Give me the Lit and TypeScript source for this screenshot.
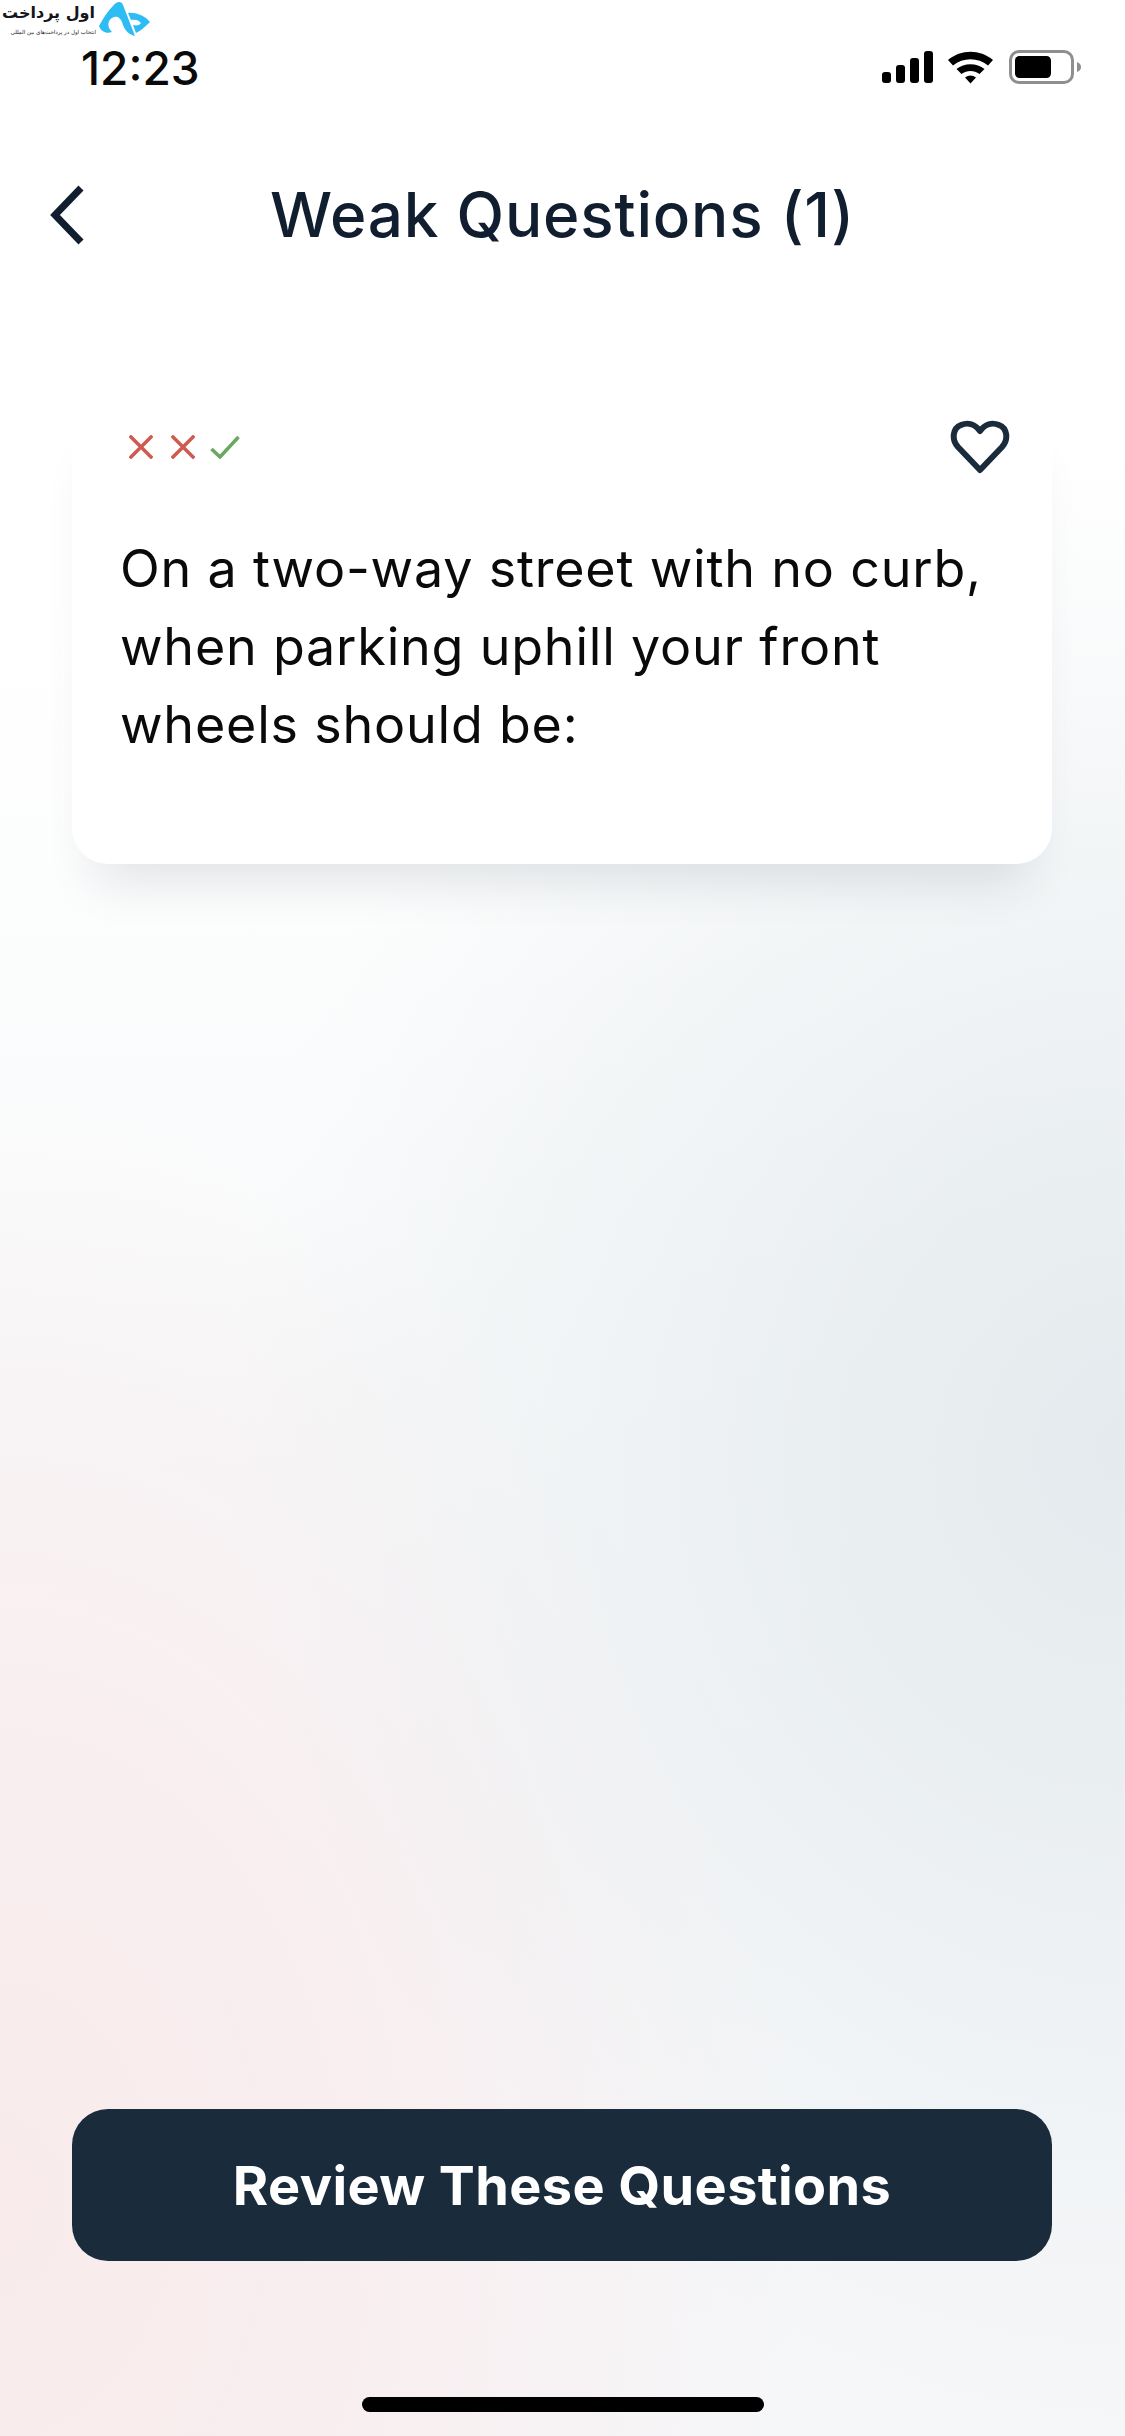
import { LitElement, html, css } from "lit";
import { customElement } from "lit/decorators.js";

@customElement("app-root")
export class AppRoot extends LitElement {
  static styles = css`
    :host { display: block; width: 1125px; font-family: "Inter", "Noto Sans", sans-serif; }
    .page {
      position: relative; width: 1125px; height: 2436px; overflow: hidden; box-sizing: border-box;
      display: flex; flex-direction: column;
      background:
        radial-gradient(900px 1000px at 1125px 1450px, #e4eaed 0%, rgba(228,234,237,0.6) 40%, rgba(228,234,237,0) 100%),
        radial-gradient(800px 1100px at 0px 2200px, #f9ebec 0%, rgba(249,235,236,0.75) 45%, rgba(249,235,236,0) 100%),
        linear-gradient(180deg, #ffffff 0%, #ffffff 25%, #f7f9fa 60%, #f6f7f9 100%);
    }
    .logo { position: absolute; left: 0; top: 0; width: 152px; height: 38px; }
    .logo-title { position: absolute; left: 1px; top: -1px; width: 94px; text-align: right; font: 700 16px/28px "DejaVu Sans", sans-serif; color: #14161c; white-space: nowrap; }
    .logo-sub { position: absolute; left: 1px; top: 27px; width: 95px; text-align: right; font: 400 5.5px/10px "DejaVu Sans", sans-serif; color: #14161c; white-space: nowrap; }
    .logo-mark { position: absolute; left: 98px; top: 0; width: 54px; height: 38px; }
    .status { height: 100px; box-sizing: border-box; padding: 40px 43px 0 81px; display: flex; justify-content: space-between; align-items: flex-start; flex: none; }
    .time { font-size: 46px; line-height: 56px; font-weight: 500; color: #0a0a0a; }
    .status-icons { display: block; margin-top: 10px; width: 200px; height: 36px; }
    .header { height: 130px; margin-top: 50px; display: flex; align-items: center; justify-content: center; position: relative; flex: none; }
    .back { position: absolute; left: 40px; top: 50%; margin-top: -49px; width: 50px; height: 98px; }
    .title { font-size: 62px; font-weight: 500; letter-spacing: 0.8px; color: #111e30; line-height: 70px; }
    .content { flex: 1; padding: 124px 73px 0 72px; }
    .card {
      background: #fff; border-radius: 0 0 36px 36px; height: 460px; box-sizing: border-box;
      box-shadow: 0 40px 50px -24px rgba(30,45,60,0.13);
      padding: 31px 42px 0 48px;
    }
    .card-top { display: flex; justify-content: space-between; align-items: flex-start; }
    .marks { display: flex; gap: 18px; margin-left: 9px; }
    .marks svg { display: block; }
    .heart { display: block; margin-top: -15px; }
    .question { margin: 56px 0 0 0; font-size: 52px; line-height: 78px; letter-spacing: 0.8px; color: #0a0a0a; font-weight: 400; }
    .footer { padding: 0 73px 175px 72px; flex: none; }
    .btn {
      height: 152px; border-radius: 36px; background: #1a2b3c; color: #fff;
      display: flex; align-items: center; justify-content: center;
      font-size: 54px; font-weight: 700; letter-spacing: 0.4px;
    }
    .home { position: absolute; left: 362px; top: 2397px; width: 402px; height: 15px; border-radius: 8px; background: #000; }
  `;

  render() {
    return html`
      <div class="page">
        <div class="logo">
          <div class="logo-title" dir="rtl" lang="fa">اول پرداخت</div>
          <div class="logo-sub" dir="rtl" lang="fa">انتخاب اول در پرداخت‌های بین المللی</div>
          <svg class="logo-mark" viewBox="0 0 54 38" aria-hidden="true">
            <path d="M1 26 C6 17 12 8 18 3 C21 1 24 2 25 5 L37 36 C31 34 28 32 25 25 C23 18 20 16 16 17 C10 19 8 26 14 32 C9 34 3 32 1 26Z" fill="#2dbcf4"/>
            <path d="M30 13 C39 12 48 17 52 22 C47 27 42 31 38 33 L35 25 C39 26 42 25 43 23 C41 20 37 19 33 20Z" fill="#2dbcf4"/>
          </svg>
        </div>

        <div class="status">
          <div class="time">12:23</div>
          <svg class="status-icons" viewBox="0 0 200 36" aria-hidden="true">
            <rect x="0" y="22" width="9" height="11" rx="3" fill="#000"/>
            <rect x="14" y="15" width="9" height="18" rx="3" fill="#000"/>
            <rect x="28" y="8" width="9" height="25" rx="3" fill="#000"/>
            <rect x="42" y="1" width="9" height="32" rx="3" fill="#000"/>
            <path d="M66 10 C79 -1 98 -1 111 10 L106 15.5 C96 7 81 7 71 15.5Z" fill="#000"/>
            <path d="M74.5 19 C82 12.5 95 12.5 102.5 19 L97.5 24 C92 20 85 20 79.5 24Z" fill="#000"/>
            <path d="M83 27.5 C86.5 24.8 90.5 24.8 94 27.5 L88.5 33.5Z" fill="#000"/>
            <rect x="128.5" y="1.5" width="62" height="31" rx="8.5" fill="none" stroke="#8f8f8f" stroke-width="3"/>
            <rect x="133" y="6" width="36" height="22" rx="4.5" fill="#000"/>
            <path d="M195 12 C198 13 199 15 199 17 C199 19 198 21 195 22Z" fill="#8f8f8f"/>
          </svg>
        </div>

        <div class="header">
          <svg class="back" viewBox="0 0 50 98" aria-hidden="true">
            <path d="M41 22 L15 49 L41 76" fill="none" stroke="#111e30" stroke-width="7"/>
          </svg>
          <div class="title">Weak Questions (1)</div>
        </div>

        <div class="content">
          <div class="card">
            <div class="card-top">
              <div class="marks">
                <svg width="24" height="24" viewBox="0 0 24 24"><path d="M2 2 L22 22 M22 2 L2 22" stroke="#cf5a50" stroke-width="3.5" stroke-linecap="square"/></svg>
                <svg width="24" height="24" viewBox="0 0 24 24"><path d="M2 2 L22 22 M22 2 L2 22" stroke="#cf5a50" stroke-width="3.5" stroke-linecap="square"/></svg>
                <svg width="30" height="24" viewBox="0 0 30 24" style="margin-left:-3px"><path d="M1.5 14 L10 22 L28.5 2" fill="none" stroke="#6aa861" stroke-width="3.5"/></svg>
              </div>
              <svg class="heart" width="60" height="54" viewBox="0 0 60 54" aria-hidden="true">
                <path d="M30 50 L8 27 C1 19 3 8 11 5 C18 2 25 4 30 11 C35 4 42 2 49 5 C57 8 59 19 52 27Z" fill="none" stroke="#1a2b3c" stroke-width="6" stroke-linejoin="round"/>
              </svg>
            </div>
            <p class="question">On a two-way street with no curb, when parking uphill your front wheels should be:</p>
          </div>
        </div>

        <div class="footer"><div class="btn">Review These Questions</div></div>
        <div class="home"></div>
      </div>
    `;
  }
}
